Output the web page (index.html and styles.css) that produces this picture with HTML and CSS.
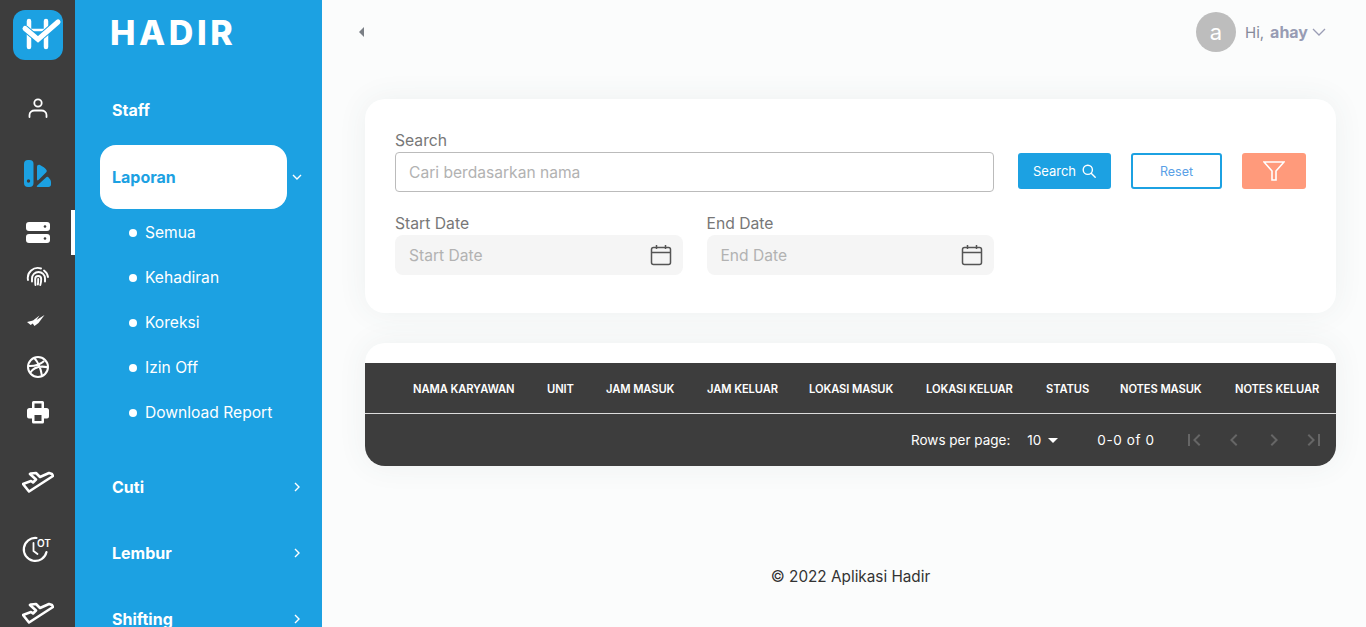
FILE: index.html
```html
<!DOCTYPE html>
<html lang="id">
<head>
<meta charset="utf-8">
<title>Hadir</title>
<link rel="stylesheet" href="styles.css">
</head>
<body>
<div class="app">
  <nav class="rail">
    <div class="logo">
      <svg viewBox="0 0 50 50" width="50" height="50"><rect width="50" height="50" rx="12" fill="#1ca1e2"/><path d="M16 11V37M33 11V37" stroke="#fff" stroke-width="4.500" stroke-linecap="round"/><path d="M16 20H33" stroke="#fff" stroke-width="2.500"/><path d="M12 18.500L25 29.500L45 12" fill="none" stroke="#1ca1e2" stroke-width="7"/><path d="M12 18.500L25 29.500L45 12" fill="none" stroke="#fff" stroke-width="5" stroke-linecap="round"/></svg>
    </div>
    <a class="rail-item r-person"><svg viewBox="0 0 24 24" width="24" height="24" fill="none" stroke="#fff" stroke-width="1.800" stroke-linecap="round"><circle cx="12" cy="7" r="3.700"/><path d="M3.500 21v-2c0-3 2.500-4.500 5-4.500h7c2.500 0 5 1.500 5 4.500v2"/></svg></a>
    <a class="rail-item r-stack"><svg viewBox="0 0 30 30" width="30" height="30"><rect x="1" y="2" width="9.500" height="27" rx="4" fill="#1ca1e2"/><circle cx="5.500" cy="23" r="1.700" fill="#3d3d3d"/><path d="M14 9c0-2 1.500-2.700 3-2 3 1.500 5 3 6.500 5 .5 1 .3 1.700-.5 2.500L15.500 22c-.8.800-1.500.3-1.500-.8z" fill="#1ca1e2"/><path d="M14.500 29c-.8 0-1-.7-.5-1.200l9-8.300c1-1 2-.8 2.800.2l1.400 1.800c.5.700.8 1.500.8 2.500v2.500c0 1.500-1 2.500-2.500 2.500z" fill="#1ca1e2"/></svg></a>
    <a class="rail-item r-active r-server"><svg viewBox="0 0 26 24" width="26" height="24"><rect x="1" y="1" width="24" height="9" rx="3" fill="#fff"/><rect x="1" y="13" width="24" height="9" rx="3" fill="#fff"/><circle cx="20" cy="5.500" r="1.300" fill="#3d3d3d"/><circle cx="20" cy="17.500" r="1.300" fill="#3d3d3d"/></svg></a>
    <a class="rail-item r-tight"><svg viewBox="0 0 24 24" width="24" height="24" fill="none" stroke="#fff" stroke-width="1.900" stroke-linecap="round"><path d="M2 15A10 10 0 0 1 15 3.500"/><path d="M18 5.500A10 10 0 0 1 22 12"/><path d="M6 16.500v-3a6.500 6.500 0 0 1 13 0v3"/><path d="M9.500 20c-.3-2-.3-4-.3-6a3 3 0 0 1 6 0c0 2-.2 4-.9 6"/><path d="M12.200 14c0 2 0 4-.3 5.500"/></svg></a>
    <a class="rail-item r-tight"><svg viewBox="0 0 24 24" width="24" height="24" fill="#fff"><path d="M1 13l6-1.500 6.500-5-3 4.500 8-5-6 8-4 3-1.800-2.500-2 1.500z"/></svg></a>
    <a class="rail-item r-ball"><svg viewBox="0 0 24 24" width="24" height="24" fill="none" stroke="#fff" stroke-width="2"><circle cx="12" cy="12" r="10"/><path d="M8 2.800c3 3 6.500 9 8 18M2.200 11c5 .3 11-.6 16-5M4 18c3-5 9-7.500 17.800-5.800"/></svg></a>
    <a class="rail-item r-print"><svg viewBox="0 0 24 24" width="24" height="24" fill="#fff"><path fill-rule="evenodd" d="M6 2.500A1.500 1.500 0 0 1 7.500 1h9A1.500 1.500 0 0 1 18 2.500V8h2.500A2.500 2.500 0 0 1 23 10.500v6a2 2 0 0 1-2 2h-3V22a1.500 1.500 0 0 1-1.500 1.500h-9A1.500 1.500 0 0 1 6 22v-3.500H3a2 2 0 0 1-2-2v-6A2.500 2.500 0 0 1 3.500 8H6zM8.500 3.500V8h7V3.500zM8.500 15v6h7v-6z"/></svg></a>
    <a class="rail-item r-plane1"><svg viewBox="0 0 32 24" width="32" height="24" fill="none" stroke="#fff" stroke-width="2.600" stroke-linejoin="round"><path d="M9 3.500l5-.5 4 4 9-4 3 1 1 2-24 15.500-6-7.500 8-3 2 1.500 3-3-6-5.500z"/></svg></a>
    <a class="rail-item r-clock"><svg viewBox="0 0 32 30" width="32" height="30" fill="none" stroke="#fff" stroke-width="2.200" stroke-linecap="round"><path d="M14.500 4A11.500 11.500 0 1 0 24.500 18"/><path d="M11.500 9v8l4 3" stroke-width="1.800"/></svg><span class="ot">OT</span></a>
    <a class="rail-item r-plane2"><svg viewBox="0 0 32 24" width="32" height="24" fill="none" stroke="#fff" stroke-width="2.600" stroke-linejoin="round"><path d="M9 3.500l5-.5 4 4 9-4 3 1 1 2-24 15.500-6-7.500 8-3 2 1.500 3-3-6-5.500z"/></svg></a>
  </nav>
  <aside class="side">
    <div class="brand">HADIR</div>
    <ul class="menu">
      <li class="menu-item first"><span class="menu-label">Staff</span></li>
      <li class="menu-item open"><span class="menu-label">Laporan</span><svg class="chev" viewBox="0 0 12 12" width="12" height="12" fill="none" stroke="#fff" stroke-width="1.400"><path d="M2 4l4 4 4-4"/></svg></li>
      <li class="sub">Semua</li>
      <li class="sub">Kehadiran</li>
      <li class="sub">Koreksi</li>
      <li class="sub">Izin Off</li>
      <li class="sub">Download Report</li>
      <li class="menu-item after-sub"><span class="menu-label">Cuti</span><svg class="chev" viewBox="0 0 12 12" width="12" height="12" fill="none" stroke="#fff" stroke-width="1.400"><path d="M4 2l4 4-4 4"/></svg></li>
      <li class="menu-item"><span class="menu-label">Lembur</span><svg class="chev" viewBox="0 0 12 12" width="12" height="12" fill="none" stroke="#fff" stroke-width="1.400"><path d="M4 2l4 4-4 4"/></svg></li>
      <li class="menu-item"><span class="menu-label">Shifting</span><svg class="chev" viewBox="0 0 12 12" width="12" height="12" fill="none" stroke="#fff" stroke-width="1.400"><path d="M4 2l4 4-4 4"/></svg></li>
    </ul>
  </aside>
  <main class="main">
    <header class="top">
      <span class="caret-left"></span>
      <div class="user">
        <span class="avatar">a</span>
        <span class="hi">Hi,</span>
        <span class="uname">ahay</span>
        <svg viewBox="0 0 14 8" width="14" height="8" fill="none" stroke="#9a9db5" stroke-width="1.300"><path d="M1 1l6 6 6-6"/></svg>
      </div>
    </header>
    <section class="card filter">
      <div class="fields">
        <label class="field full"><span class="lbl">Search</span><span class="input"><span class="ph">Cari berdasarkan nama</span></span></label>
        <label class="field"><span class="lbl">Start Date</span><span class="input soft"><span class="ph">Start Date</span><svg class="cal" viewBox="0 0 22 22" width="22" height="22" fill="none" stroke="#555" stroke-width="1.500"><rect x="1.500" y="3.500" width="19" height="17" rx="2"/><path d="M1.500 8.500h19M6.500 1v4M15.500 1v4"/></svg></span></label>
        <label class="field"><span class="lbl">End Date</span><span class="input soft"><span class="ph">End Date</span><svg class="cal" viewBox="0 0 22 22" width="22" height="22" fill="none" stroke="#555" stroke-width="1.500"><rect x="1.500" y="3.500" width="19" height="17" rx="2"/><path d="M1.500 8.500h19M6.500 1v4M15.500 1v4"/></svg></span></label>
      </div>
      <div class="actions">
        <button class="btn primary">Search<svg viewBox="0 0 14 14" width="14" height="14" fill="none" stroke="#fff" stroke-width="1.400" stroke-linecap="round"><circle cx="5.800" cy="5.800" r="4.600"/><path d="M9.200 9.200l4 4"/></svg></button>
        <button class="btn outline">Reset</button>
        <button class="btn orange"><svg viewBox="0 0 22 20" width="22" height="20" fill="none" stroke="#fff" stroke-width="1.600"><path d="M1 1h20l-8 9v9h-4v-9z"/></svg></button>
      </div>
    </section>
    <section class="card table">
      <div class="thead">
        <span>NAMA KARYAWAN</span><span>UNIT</span><span>JAM MASUK</span><span>JAM KELUAR</span><span>LOKASI MASUK</span><span>LOKASI KELUAR</span><span>STATUS</span><span>NOTES MASUK</span><span>NOTES KELUAR</span>
      </div>
      <div class="tfoot">
        <span class="rows">Rows per page:</span>
        <span class="pp">10</span><span class="drop"></span>
        <span class="count">0-0 of 0</span>
        <div class="pager">
          <svg viewBox="0 0 24 24" width="24" height="24" fill="currentColor"><path d="M18.410 16.590L13.820 12l4.590-4.590L17 6l-6 6 6 6zM6 6h2v12H6z"/></svg>
          <svg viewBox="0 0 24 24" width="24" height="24" fill="currentColor"><path d="M15.410 7.410L14 6l-6 6 6 6 1.410-1.410L10.830 12z"/></svg>
          <svg viewBox="0 0 24 24" width="24" height="24" fill="currentColor"><path d="M10 6L8.590 7.410 13.170 12l-4.580 4.590L10 18l6-6z"/></svg>
          <svg viewBox="0 0 24 24" width="24" height="24" fill="currentColor"><path d="M5.590 7.410L10.180 12l-4.590 4.590L7 18l6-6-6-6zM16 6h2v12h-2z"/></svg>
        </div>
      </div>
    </section>
    <footer class="foot">© 2022 Aplikasi Hadir</footer>
  </main>
</div>
</body>
</html>
```
FILE: styles.css
```css
* { box-sizing: border-box; }
html, body { margin: 0; height: 100%; overflow: hidden; }
body { font-family: "Inter", "Liberation Sans", sans-serif; background: #fbfcfc; color: #333; }
.app { display: flex; height: 627px; overflow: hidden; }

.rail { width: 75px; flex: none; background: #3d3d3d; display: flex; flex-direction: column; padding-top: 10px; }
.logo { width: 50px; height: 50px; margin-left: 13px; margin-bottom: 25px; }
.logo svg { display: block; }
.rail-item { flex: none; height: 45px; display: flex; align-items: center; justify-content: center; position: relative; }
.r-stack { margin-top: 20px; }
.r-server { margin-top: 15px; }
.r-active { border-right: 4px solid #fff; padding-left: 4px; }
.r-tight { margin-top: -1px; }
.r-ball { margin-top: 1px; }
.r-plane1 { margin-top: 25px; }
.r-clock { margin-top: 22px; }
.r-plane2 { margin-top: 19px; }
.ot { position: absolute; left: 37px; top: 11px; font-size: 10px; font-weight: 600; color: #fff; }

.side { width: 247px; flex: none; background: #1ca1e2; color: #fff; }
.brand { height: 78px; padding: 14px 0 0 35px; font-size: 34px; line-height: 38px; font-weight: 800; letter-spacing: 3.600px; }
.menu { list-style: none; margin: 0; padding: 0 0 0 25px; }
.menu-item { height: 64px; margin-bottom: 2px; display: flex; align-items: center; padding-left: 12px; position: relative; width: 187px; font-size: 16px; font-weight: 700; }
.menu-item.first { margin-bottom: 3px; }
.menu-item.open { background: #fff; color: #1ca1e2; border-radius: 16px; margin-bottom: 1px; padding-bottom: 1px; }
.chev { position: absolute; left: 191px; top: 26px; }
.sub { height: 45px; display: flex; align-items: center; padding-left: 45px; font-size: 15.600px; position: relative; }
.sub::before { content: ""; position: absolute; left: 29px; top: 19px; width: 8px; height: 8px; border-radius: 50%; background: #fff; }
.after-sub { margin-top: 20px; }

.main { flex: 1; min-width: 0; padding: 0 30px 0 43px; }
.top { height: 64px; display: flex; align-items: center; justify-content: space-between; padding-right: 10px; }
.caret-left { width: 0; height: 0; margin-left: -6px; border-style: solid; border-width: 5px 5px 5px 0; border-color: transparent #7a7f85 transparent transparent; }
.user { display: flex; align-items: center; font-size: 15px; color: #858a9a; }
.avatar { width: 40px; height: 40px; border-radius: 50%; background: #bdbdbd; color: #fff; display: flex; align-items: center; justify-content: center; font-size: 22px; margin-right: 9px; }
.uname { font-size: 16px; font-weight: 700; margin-left: 6px; color: #989cb4; }
.user svg { margin-left: 4px; }

.card { background: #fff; border-radius: 20px; box-shadow: 0 0 30px rgba(60,80,80,.07); }
.filter { margin-top: 35px; height: 214px; padding: 30px; display: flex; }
.fields { width: 599px; display: grid; grid-template-columns: 1fr 1fr; column-gap: 24px; row-gap: 20px; align-content: start; }
.field { display: block; }
.full { grid-column: 1 / 3; }
.lbl { display: block; font-size: 15.700px; line-height: 23px; color: #777; }
.input { display: flex; align-items: center; justify-content: space-between; height: 40px; border: 1px solid #bbb; border-radius: 4px; padding: 0 13px; font-size: 15.600px; }
.input.soft { background: #f5f5f5; border: 0; border-radius: 8px; padding: 0 11px 0 14px; }
.ph { color: #b2b2b2; }
.cal { display: block; }
.actions { display: flex; gap: 20px; margin: 24px 0 0 24px; align-items: flex-start; }
.btn { height: 36px; border: 0; border-radius: 3px; font-family: inherit; font-size: 13px; display: flex; align-items: center; justify-content: center; padding: 0; }
.primary { width: 93px; background: #1ca1e2; color: #fff; gap: 6px; padding-bottom: 1px; }
.outline { width: 91px; background: #fff; border: 2px solid #1ca1e2; color: #5aa0e6; font-size: 12.500px; }
.orange { width: 64px; background: #ff9a7b; }

.table { margin-top: 30px; height: 123px; padding-top: 20px; }
.thead { height: 51px; padding-top: 1px; background: #3d3d3d; color: #fff; border-bottom: 1px solid #ddd; display: grid; grid-template-columns: 134px 59px 101px 102px 117px 120px 74px 115px 101px; padding-left: 48px; align-items: center; font-size: 11.200px; font-weight: 600; letter-spacing: -.1px; white-space: nowrap; }
.tfoot { height: 52px; background: #3d3d3d; border-radius: 0 0 20px 20px; color: #fff; display: flex; align-items: center; font-size: 13.500px; padding-left: 546px; }
.pp { margin-left: 17px; width: 14px; white-space: nowrap; }
.drop { width: 0; height: 0; margin-left: 7px; border-style: solid; border-width: 5px 5px 0; border-color: #fff transparent transparent; }
.count { margin-left: 39px; letter-spacing: .6px; }
.pager { display: flex; gap: 16px; margin-left: 27px; color: #666; }

.foot { margin-top: 101px; text-align: center; font-size: 15.300px; color: #333; }
```
